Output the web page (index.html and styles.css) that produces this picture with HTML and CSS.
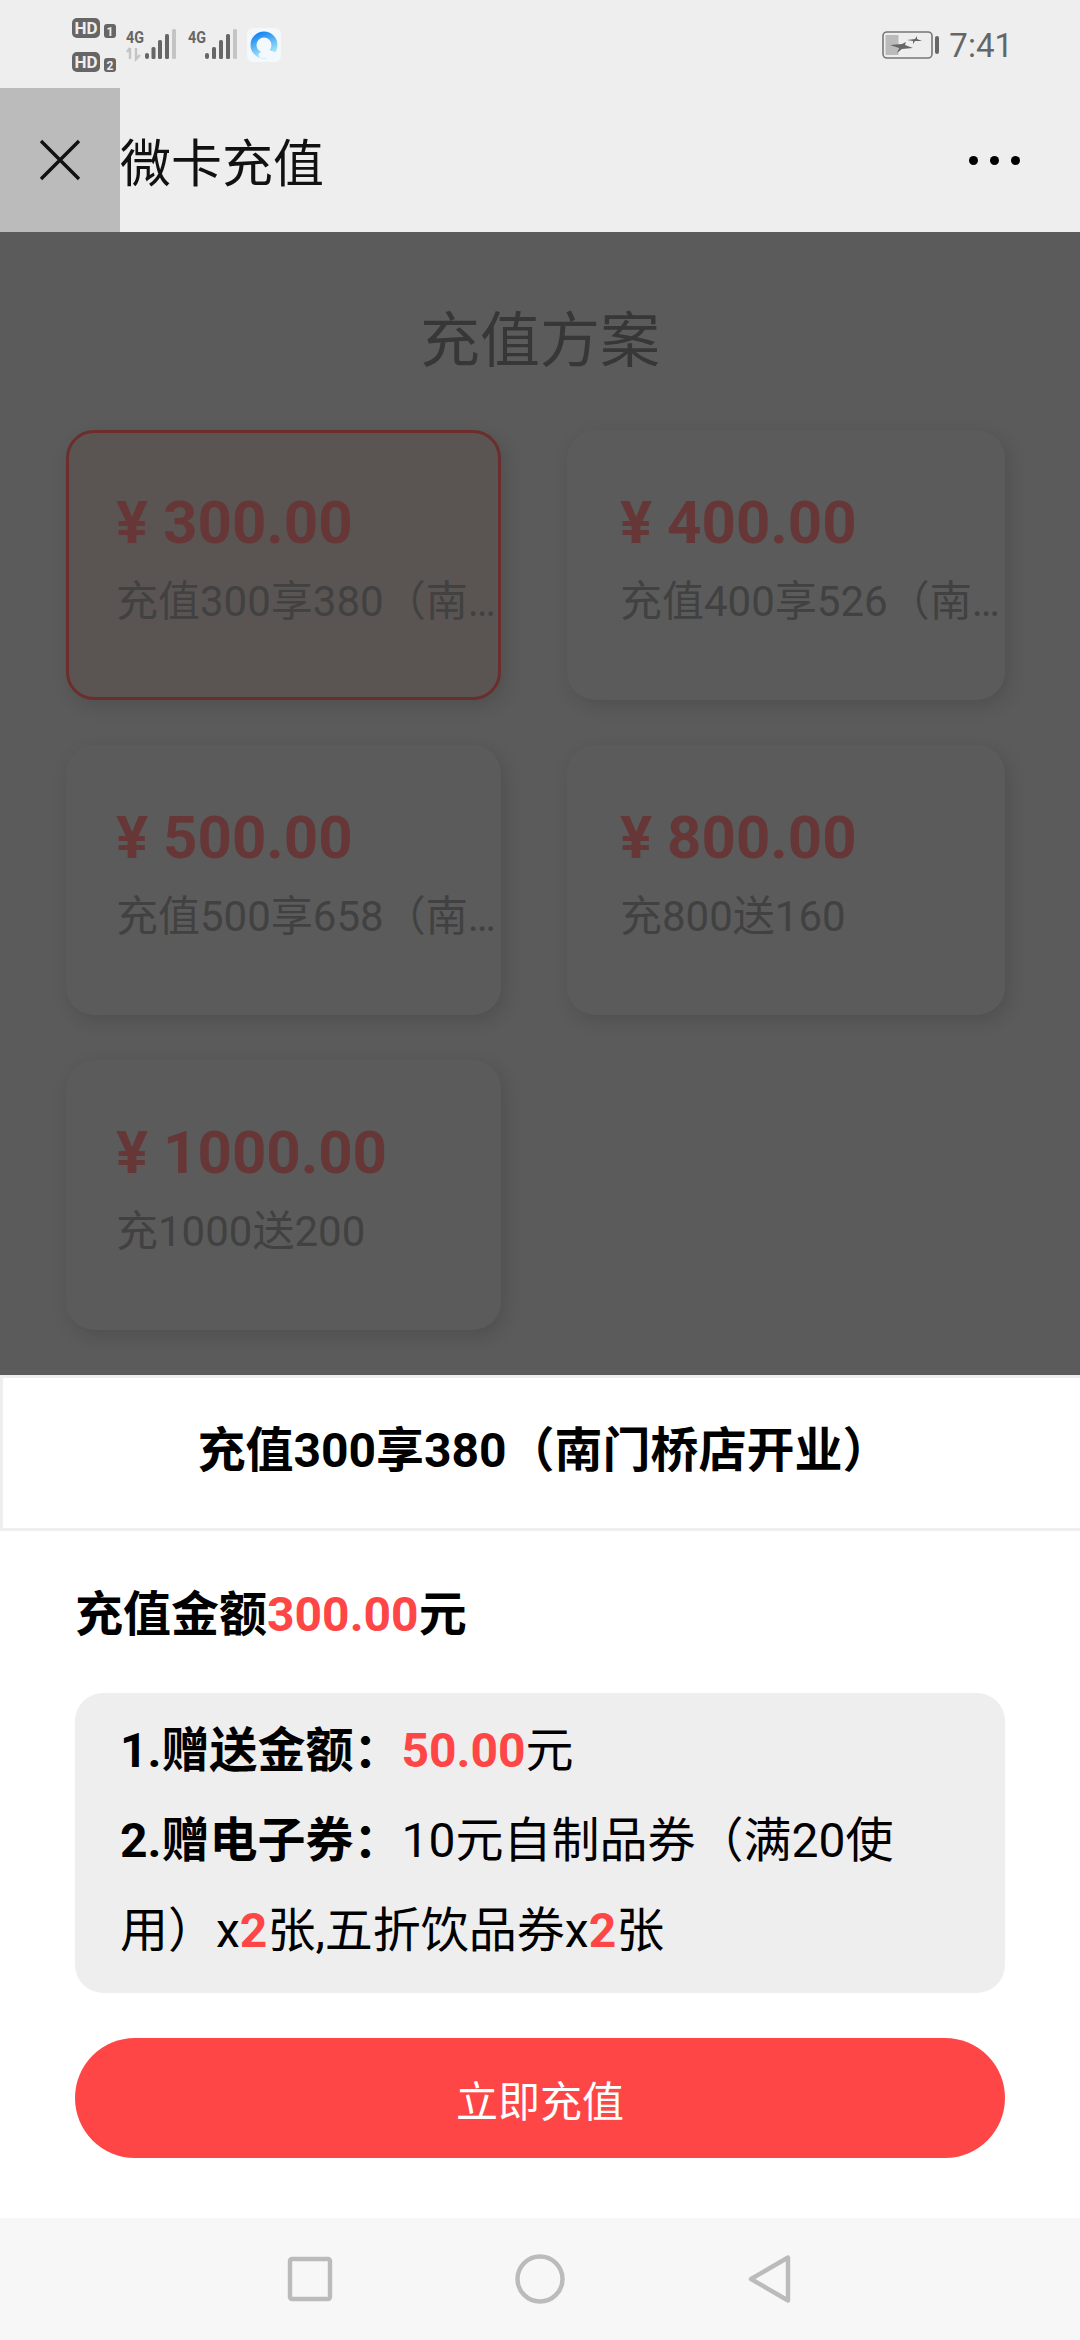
FILE: index.html
```html
<!DOCTYPE html>
<html lang="zh-CN">
<head>
    <meta charset="UTF-8">
    <meta name="viewport" content="width=device-width, initial-scale=1.0">
    <title>微卡充值</title>
    <link rel="stylesheet" href="styles.css">
</head>
<body>
    <div class="status-bar">
        <svg class="status-left" width="215" height="60" viewBox="70 15 215 60">
            <rect x="72" y="18" width="28" height="20" rx="5" fill="#666"/>
            <text class="hd" x="86" y="34" text-anchor="middle" textLength="23">HD</text>
            <rect x="104" y="24" width="12" height="14" rx="3" fill="#666"/>
            <text class="sim" x="110" y="35.5" text-anchor="middle">1</text>
            <rect x="72" y="52" width="28" height="20" rx="5" fill="#666"/>
            <text class="hd" x="86" y="68" text-anchor="middle" textLength="23">HD</text>
            <rect x="104" y="58" width="12" height="14" rx="3" fill="#666"/>
            <text class="sim" x="110" y="69.5" text-anchor="middle">2</text>

            <text class="net" x="126" y="43" textLength="18" lengthAdjust="spacingAndGlyphs">4G</text>
            <path d="M130 48v11M127 52l3-4M136 48v11l4-4" fill="none" stroke="#c4c4c4" stroke-width="2.4"/>
            <g fill="#666">
                <rect x="145" y="53" width="4" height="6" rx="2"/>
                <rect x="151.5" y="47" width="4" height="12" rx="1.5"/>
                <rect x="158" y="40" width="4" height="19" rx="1.5"/>
                <rect x="165" y="34" width="4" height="25" rx="1.5"/>
            </g>
            <rect x="172" y="29" width="4" height="30" rx="1.5" fill="#c4c4c4"/>

            <text class="net" x="188" y="43" textLength="18" lengthAdjust="spacingAndGlyphs">4G</text>
            <g fill="#666">
                <rect x="205" y="53" width="4" height="6" rx="2"/>
                <rect x="212" y="47" width="4" height="12" rx="1.5"/>
                <rect x="219" y="40" width="4" height="19" rx="1.5"/>
                <rect x="226" y="34" width="4" height="25" rx="1.5"/>
            </g>
            <rect x="233" y="29" width="4" height="30" rx="1.5" fill="#c4c4c4"/>

            <defs>
                <linearGradient id="qq" x1="0" y1="0" x2="0.4" y2="1">
                    <stop offset="0" stop-color="#0f82f2"/>
                    <stop offset="1" stop-color="#9fe3f5"/>
                </linearGradient>
            </defs>
            <rect x="247" y="28" width="34" height="34" rx="6" fill="#f3f8fd"/>
            <circle cx="264" cy="45" r="10.5" fill="none" stroke="url(#qq)" stroke-width="6"/>
            <path d="M262 58c-4 0-5-6 0-6 1-3 7-4 9-1 4 0 6 3 5 5-1 2-2 2-4 2z" fill="#f3f8fd"/>
        </svg>
        <div class="status-right">
            <svg width="58" height="28" viewBox="0 0 58 28">
                <rect x="1" y="1" width="49" height="26" rx="4" fill="none" stroke="#777" stroke-width="1.6"/>
                <rect x="3.500" y="4" width="13" height="20" fill="#bbb"/>
                <rect x="53" y="5" width="4" height="18" rx="2" fill="#666"/>
                <path d="M8 14l12-1 4-2-1 3 8 3-11 1-5 4 2-5z" fill="#666"/>
                <path d="M25 9l8-1 2-3v3l5 2-7 0-2 3v-3z" fill="#666"/>
            </svg>
            <span class="clock">7:41</span>
        </div>
    </div>

    <div class="title-bar">
        <div class="close-btn">
            <svg width="44" height="44" viewBox="0 0 44 44">
                <path d="M3 3l38 38M41 3L3 41" fill="none" stroke="#111" stroke-width="3.4"/>
            </svg>
        </div>
        <div class="page-title">微卡充值</div>
        <div class="more">
            <span class="dot"></span>
            <span class="dot"></span>
            <span class="dot"></span>
        </div>
    </div>

    <div class="plans">
        <h1>充值方案</h1>
        <div class="plan-grid">
            <div class="plan selected">
                <div class="price">¥ 300.00</div>
                <div class="desc">充值300享380（南门桥店开业）</div>
            </div>
            <div class="plan">
                <div class="price">¥ 400.00</div>
                <div class="desc">充值400享526（南门桥店开业）</div>
            </div>
            <div class="plan">
                <div class="price">¥ 500.00</div>
                <div class="desc">充值500享658（南门桥店开业）</div>
            </div>
            <div class="plan">
                <div class="price">¥ 800.00</div>
                <div class="desc">充800送160</div>
            </div>
            <div class="plan">
                <div class="price">¥ 1000.00</div>
                <div class="desc">充1000送200</div>
            </div>
        </div>
    </div>

    <div class="sheet">
        <div class="sheet-title">充值300享380（南门桥店开业）</div>
        <div class="amount">充值金额<span class="red">300.00</span>元</div>
        <div class="detail">
            <b>1.赠送金额：</b><b class="red">50.00</b>元<br>
            <b>2.赠电子券：</b>10元自制品券（满20使用）x<b class="red">2</b>张,五折饮品券x<b class="red">2</b>张
        </div>
        <button class="pay-btn">立即充值</button>
    </div>

    <div class="nav-bar">
        <svg width="50" height="50" viewBox="0 0 50 50">
            <rect x="5" y="5" width="40" height="40" rx="2" fill="none" stroke="#bbb" stroke-width="4.4"/>
        </svg>
        <svg width="50" height="50" viewBox="0 0 50 50">
            <circle cx="25" cy="25" r="22.5" fill="none" stroke="#bbb" stroke-width="4.4"/>
        </svg>
        <svg width="50" height="50" viewBox="0 0 50 50">
            <path d="M43 3.500v43L6 25z" fill="none" stroke="#bbb" stroke-width="4.4" stroke-linejoin="round"/>
        </svg>
    </div>
</body>
</html>
```

FILE: styles.css
```css
* {
    box-sizing: border-box;
}

body {
    font-family: Roboto, "Noto Sans CJK SC", sans-serif;
    width: 1080px;
    height: 2340px;
    margin: 0;
    display: flex;
    flex-direction: column;
    background-color: #fff;
    color: #000;
}

.status-bar {
    height: 88px;
    flex: none;
    display: flex;
    justify-content: space-between;
    padding: 15px 70px 0;
    background-color: #eee;
}

.status-left {
    display: block;
}

.hd {
    font-size: 17px;
    font-weight: 700;
    fill: #eee;
}

.sim {
    font-size: 12px;
    font-weight: 700;
    fill: #eee;
}

.net {
    font-size: 17px;
    font-weight: 700;
    fill: #666;
}

.status-right {
    display: flex;
    align-items: center;
    gap: 9px;
    height: 60px;
    margin-right: -3px;
}

.clock {
    font-size: 33px;
    color: #666;
}

.title-bar {
    height: 144px;
    flex: none;
    display: flex;
    align-items: center;
    background-color: #eee;
}

.close-btn {
    width: 120px;
    height: 100%;
    display: flex;
    align-items: center;
    justify-content: center;
    background-color: #bbb;
}

.page-title {
    flex: 1;
    font-size: 51px;
    color: #111;
}

.more {
    display: flex;
    gap: 12px;
    padding-right: 60px;
}

.dot {
    width: 9px;
    height: 9px;
    border-radius: 50%;
    background-color: #000;
}

.plans {
    height: 1143px;
    flex: none;
    padding-top: 65px;
    background-color: #5b5b5b;
}

.plans h1 {
    height: 90px;
    margin: 0 0 43px;
    font-size: 60px;
    font-weight: 400;
    line-height: 90px;
    text-align: center;
    color: #373737;
}

.plan-grid {
    display: grid;
    grid-template-columns: 435px 438px;
    grid-auto-rows: 270px;
    column-gap: 66px;
    row-gap: 45px;
    padding-left: 66px;
}

.plan {
    padding: 58px 5px 0 50px;
    border-radius: 28px;
    background-color: #5b5b5b;
    box-shadow: 4px 6px 18px rgba(0, 0, 0, 0.13);
}

.plan:nth-child(even) {
    padding-left: 53px;
}

.plan.selected {
    border: 3px solid #6b2e2d;
    padding: 55px 2px 0 47px;
    background-color: #5a5553;
}

.price {
    font-size: 60px;
    font-weight: 700;
    line-height: 70px;
    color: #673737;
}

.desc {
    margin-top: 15px;
    font-size: 42px;
    line-height: 58px;
    color: #414141;
    white-space: nowrap;
    overflow: hidden;
    text-overflow: ellipsis;
}

.sheet {
    flex: 1;
    padding: 0 75px;
    background-color: #fff;
}

.sheet-title {
    height: 156px;
    margin: 0 -75px;
    padding-left: 5px;
    border: 3px solid #eee;
    border-right: none;
    font-size: 48px;
    font-weight: 700;
    line-height: 146px;
    text-align: center;
}

.amount {
    height: 162px;
    font-size: 48px;
    font-weight: 700;
    line-height: 168px;
    white-space: nowrap;
}

.red {
    color: #ff4646;
}

.detail {
    height: 300px;
    padding: 13px 45px 0;
    border-radius: 28px;
    background-color: #eee;
    font-size: 48px;
    line-height: 90px;
}

.pay-btn {
    display: block;
    width: 100%;
    height: 120px;
    margin-top: 45px;
    border: none;
    border-radius: 60px;
    background-color: #ff4646;
    color: #fff;
    font-family: inherit;
    font-size: 42px;
}

.nav-bar {
    height: 122px;
    flex: none;
    display: grid;
    grid-template-columns: repeat(3, 230px);
    justify-content: center;
    justify-items: center;
    align-items: center;
    background-color: #f7f7f7;
}
```
